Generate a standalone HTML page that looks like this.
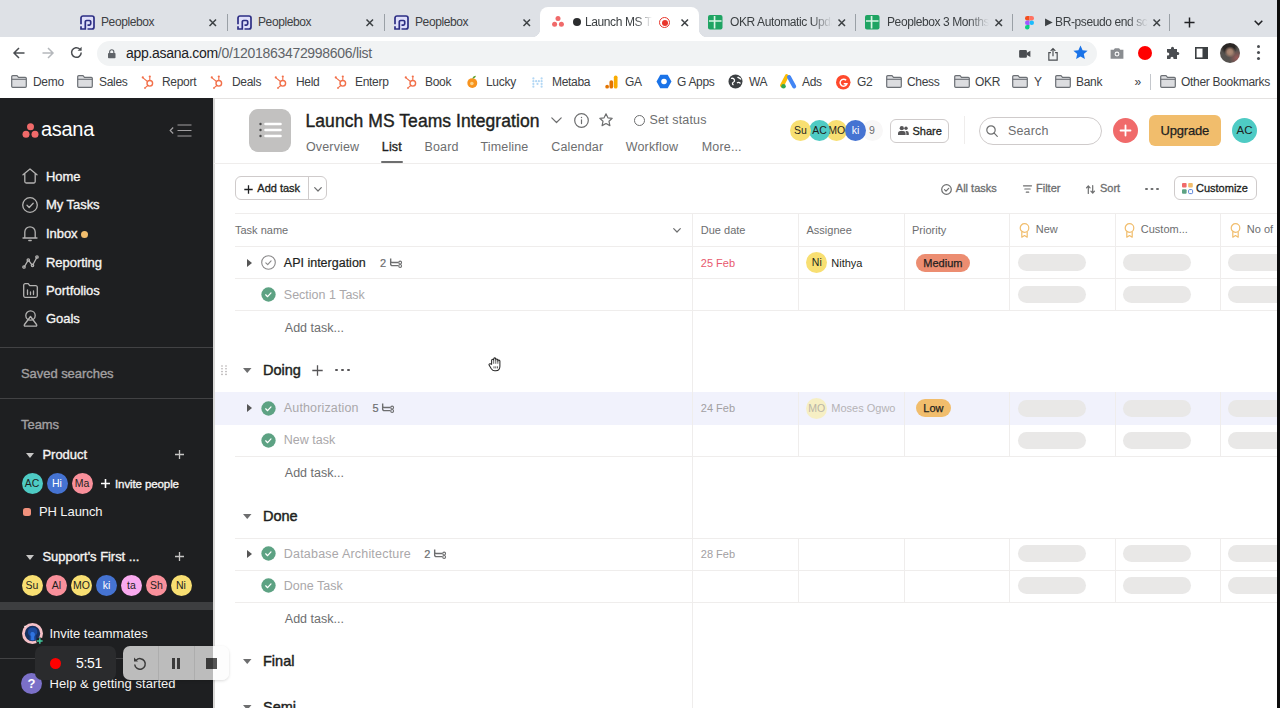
<!DOCTYPE html>
<html lang="en">
<head>
<meta charset="utf-8">
<title>Launch MS Teams Integration - Asana</title>
<style>
*{box-sizing:border-box;margin:0;padding:0}
html,body{width:1280px;height:708px;overflow:hidden;background:#fff}
body{font-family:"Liberation Sans",sans-serif;font-size:12px;color:#1e1f21;position:relative}
.a{position:absolute}
.t{position:absolute;height:20px;line-height:20px;white-space:nowrap}
svg{position:absolute;overflow:visible}
/* browser chrome */
#tabbar{left:0;top:0;width:1280px;height:37px;background:#dee1e6}
#toolbar{left:0;top:37px;width:1280px;height:31px;background:#fff}
#bookmarks{left:0;top:68px;width:1280px;height:29px;background:#fff}
.tab{font-size:12px;color:#3c4043;letter-spacing:-0.4px}
.tabx{font-size:13px;color:#3c4043}
.bm{font-size:12px;color:#3c4043;letter-spacing:-0.3px}
/* sidebar */
#side{left:0;top:97px;width:213px;height:611px;background:#1e1f21}
.nav{font-size:13px;color:#f5f4f3;-webkit-text-stroke:0.35px #f5f4f3;letter-spacing:-0.05px}
.sec{font-size:13px;color:#a2a0a2;-webkit-text-stroke:0.35px #a2a0a2;letter-spacing:-0.05px}
.av{position:absolute;width:21px;height:21px;border-radius:50%;font-size:10.500px;line-height:21px;text-align:center;color:#1e1f21}
/* main */
#main{left:213px;top:97px;width:1067px;height:611px;background:#fff}
.hline{position:absolute;height:1px;background:#efedec}
.vline{position:absolute;width:1px;background:#efedec}
.ptab{font-size:12.500px;color:#6d6e6f;letter-spacing:0.15px}
.title{font-size:17.500px;color:#1e1f21;-webkit-text-stroke:0.400px #1e1f21;letter-spacing:0.07px;height:24px!important;line-height:24px!important;margin-top:-2px}
.btn{font-size:11px;color:#1e1f21;-webkit-text-stroke:0.300px #1e1f21}
.tbtn{font-size:11px;color:#6d6e6f;-webkit-text-stroke:0.300px #6d6e6f}
.colh{font-size:11px;color:#6d6e6f}
.task{font-size:12.500px;color:#1e1f21;-webkit-text-stroke:0.200px #1e1f21}
.done{font-size:12.500px;color:#aaa8aa}
.addt{font-size:12.500px;color:#6d6e6f}
.sect{font-size:14.500px;color:#1e1f21;-webkit-text-stroke:0.450px #1e1f21}
.pill{position:absolute;width:68px;height:16px;border-radius:8px;background:#e9e8e7}
</style>
</head>
<body>
<!-- BROWSER CHROME -->
<div id="tabbar" class="a">
<div class="a" style="left:540px;top:7px;width:159px;height:30px;background:#fff;border-radius:8px 8px 0 0"></div>
<div class="a" style="left:532px;top:29px;width:8px;height:8px;background:radial-gradient(circle at 0 0,#dee1e6 8px,#fff 8.5px)"></div>
<div class="a" style="left:699px;top:29px;width:8px;height:8px;background:radial-gradient(circle at 100% 0,#dee1e6 8px,#fff 8.5px)"></div>
<!-- peoplebox tabs -->
<svg style="left:79.500px;top:14.500px" width="15" height="15" viewBox="0 0 15 15"><rect x="0.500" y="0.500" width="14" height="14" rx="2.500" fill="#dfdffa"/><path d="M1 9.300V3a2 2 0 0 1 2-2h9a2 2 0 0 1 2 2v9a2 2 0 0 1-2 2H7.500" fill="none" stroke="#2d2e83" stroke-width="1.700"/><path d="M1 11.300V14h4.300V6.800a1.300 1.300 0 0 1 1.300-1.300h2.800a1.300 1.300 0 0 1 1.300 1.300v2a1.300 1.300 0 0 1-1.300 1.300H7.500" fill="none" stroke="#2d2e83" stroke-width="1.700"/></svg>
<div class="t tab" style="left:101px;top:12px">Peoplebox</div>
<svg style="left:208.5px;top:18.500px" width="7.500" height="7.500" viewBox="0 0 7.500 7.500"><path d="M0.500 0.500l6.500 6.500M7 0.500L0.500 7" stroke="#3c4043" stroke-width="1.500" fill="none"/></svg>
<div class="a" style="left:227px;top:14px;width:1px;height:17px;background:#9aa0a6"></div>
<svg style="left:236.500px;top:14.500px" width="15" height="15" viewBox="0 0 15 15"><rect x="0.500" y="0.500" width="14" height="14" rx="2.500" fill="#dfdffa"/><path d="M1 9.300V3a2 2 0 0 1 2-2h9a2 2 0 0 1 2 2v9a2 2 0 0 1-2 2H7.500" fill="none" stroke="#2d2e83" stroke-width="1.700"/><path d="M1 11.300V14h4.300V6.800a1.300 1.300 0 0 1 1.300-1.300h2.800a1.300 1.300 0 0 1 1.300 1.300v2a1.300 1.300 0 0 1-1.300 1.300H7.500" fill="none" stroke="#2d2e83" stroke-width="1.700"/></svg>
<div class="t tab" style="left:258px;top:12px">Peoplebox</div>
<svg style="left:365.5px;top:18.500px" width="7.500" height="7.500" viewBox="0 0 7.500 7.500"><path d="M0.500 0.500l6.500 6.500M7 0.500L0.500 7" stroke="#3c4043" stroke-width="1.500" fill="none"/></svg>
<div class="a" style="left:384px;top:14px;width:1px;height:17px;background:#9aa0a6"></div>
<svg style="left:393.500px;top:14.500px" width="15" height="15" viewBox="0 0 15 15"><rect x="0.500" y="0.500" width="14" height="14" rx="2.500" fill="#dfdffa"/><path d="M1 9.300V3a2 2 0 0 1 2-2h9a2 2 0 0 1 2 2v9a2 2 0 0 1-2 2H7.500" fill="none" stroke="#2d2e83" stroke-width="1.700"/><path d="M1 11.300V14h4.300V6.800a1.300 1.300 0 0 1 1.300-1.300h2.800a1.300 1.300 0 0 1 1.300 1.300v2a1.300 1.300 0 0 1-1.300 1.300H7.500" fill="none" stroke="#2d2e83" stroke-width="1.700"/></svg>
<div class="t tab" style="left:415px;top:12px">Peoplebox</div>
<svg style="left:522.5px;top:18.500px" width="7.500" height="7.500" viewBox="0 0 7.500 7.500"><path d="M0.500 0.500l6.500 6.500M7 0.500L0.500 7" stroke="#3c4043" stroke-width="1.500" fill="none"/></svg>
<!-- active asana tab -->
<svg style="left:552px;top:16px" width="12" height="11" viewBox="0 0 12 11"><circle cx="6" cy="2.6" r="2.5" fill="#f06a6a"/><circle cx="2.6" cy="8.2" r="2.5" fill="#f06a6a"/><circle cx="9.4" cy="8.2" r="2.5" fill="#f06a6a"/></svg>
<div class="a" style="left:573px;top:18px;width:8px;height:8px;border-radius:50%;background:#2b2c2e"></div>
<div class="t tab" style="left:585px;top:12px;width:67px;overflow:hidden;-webkit-mask-image:linear-gradient(90deg,#000 75%,transparent 100%);mask-image:linear-gradient(90deg,#000 75%,transparent 100%)">Launch MS Teams</div>
<div class="a" style="left:659px;top:17px;width:11px;height:11px;border-radius:50%;border:1.5px solid #e8352b;background:#fff"></div>
<div class="a" style="left:661.5px;top:19.5px;width:6px;height:6px;border-radius:50%;background:#e8352b"></div>
<svg style="left:680.5px;top:18.500px" width="7.500" height="7.500" viewBox="0 0 7.500 7.500"><path d="M0.500 0.500l6.500 6.500M7 0.500L0.500 7" stroke="#3c4043" stroke-width="1.500" fill="none"/></svg>
<!-- sheets tabs -->
<svg style="left:708px;top:14.7px" width="14.5" height="14.5" viewBox="0 0 15 15"><rect width="15" height="15" rx="2" fill="#1fa463"/><path d="M6.8 1v13M1 6.200h13" stroke="#d9f5e5" stroke-width="1.7" fill="none"/></svg>
<div class="t tab" style="left:730px;top:12px;width:102px;overflow:hidden;-webkit-mask-image:linear-gradient(90deg,#000 80%,transparent 100%);mask-image:linear-gradient(90deg,#000 80%,transparent 100%)">OKR Automatic Update</div>
<svg style="left:837.5px;top:18.500px" width="7.500" height="7.500" viewBox="0 0 7.500 7.500"><path d="M0.500 0.500l6.500 6.500M7 0.500L0.500 7" stroke="#3c4043" stroke-width="1.500" fill="none"/></svg>
<div class="a" style="left:855px;top:14px;width:1px;height:17px;background:#9aa0a6"></div>
<svg style="left:865px;top:14.7px" width="14.5" height="14.5" viewBox="0 0 15 15"><rect width="15" height="15" rx="2" fill="#1fa463"/><path d="M6.8 1v13M1 6.200h13" stroke="#d9f5e5" stroke-width="1.7" fill="none"/></svg>
<div class="t tab" style="left:887px;top:12px;width:102px;overflow:hidden;-webkit-mask-image:linear-gradient(90deg,#000 80%,transparent 100%);mask-image:linear-gradient(90deg,#000 80%,transparent 100%)">Peoplebox 3 Months</div>
<svg style="left:994.5px;top:18.500px" width="7.500" height="7.500" viewBox="0 0 7.500 7.500"><path d="M0.500 0.500l6.500 6.500M7 0.500L0.500 7" stroke="#3c4043" stroke-width="1.500" fill="none"/></svg>
<div class="a" style="left:1012px;top:14px;width:1px;height:17px;background:#9aa0a6"></div>
<!-- figma tab -->
<svg style="left:1025px;top:16px" width="9" height="13.500" viewBox="0 0 10 15"><path d="M2.5 0H5v5H2.5a2.5 2.5 0 0 1 0-5z" fill="#f24e1e"/><path d="M5 0h2.5a2.5 2.5 0 0 1 0 5H5z" fill="#ff7262"/><path d="M2.5 5H5v5H2.5a2.5 2.5 0 0 1 0-5z" fill="#a259ff"/><circle cx="7.5" cy="7.5" r="2.5" fill="#1abcfe"/><path d="M2.5 10H5v2.5A2.5 2.5 0 1 1 2.500 10z" fill="#0acf83"/></svg>
<div class="t tab" style="left:1044.500px;top:12px;width:103px;overflow:hidden;-webkit-mask-image:linear-gradient(90deg,#000 80%,transparent 100%);mask-image:linear-gradient(90deg,#000 80%,transparent 100%)"><span style="font-size:10px;position:relative;top:-1px">▶</span> BR-pseudo end sc</div>
<svg style="left:1152.5px;top:18.500px" width="7.500" height="7.500" viewBox="0 0 7.500 7.500"><path d="M0.500 0.500l6.500 6.500M7 0.500L0.500 7" stroke="#3c4043" stroke-width="1.500" fill="none"/></svg>
<div class="a" style="left:1169px;top:14px;width:1px;height:17px;background:#9aa0a6"></div>
<svg style="left:1184px;top:17px" width="11" height="11" viewBox="0 0 12 12"><path d="M6 0.5v11M0.5 6h11" stroke="#202124" stroke-width="1.6" fill="none"/></svg>
<svg style="left:1254px;top:20px" width="9" height="6" viewBox="0 0 9 6"><path d="M0.7 0.8L4.5 4.6 8.3 0.8" stroke="#202124" stroke-width="1.5" fill="none"/></svg>
</div>
<div id="toolbar" class="a">
<svg style="left:13px;top:10px" width="12" height="12" viewBox="0 0 12 12"><path d="M11.5 6H1M6 1L1 6l5 5" stroke="#4a4d51" stroke-width="1.5" fill="none"/></svg>
<svg style="left:42px;top:10px" width="12" height="12" viewBox="0 0 12 12"><path d="M0.5 6H11M6 1l5 5-5 5" stroke="#b5b8bc" stroke-width="1.5" fill="none"/></svg>
<svg style="left:70px;top:9px" width="13" height="13" viewBox="0 0 13 13"><path d="M11.2 6.5a4.8 4.8 0 1 1-1.5-3.5" stroke="#4a4d51" stroke-width="1.5" fill="none"/><path d="M11.6 0.8v4h-4z" fill="#4a4d51"/></svg>
<div class="a" style="left:97px;top:3.500px;width:1000px;height:25.500px;border-radius:13px;background:#f1f3f4"></div>
<svg style="left:108px;top:11.500px" width="7.500" height="9.500" viewBox="0 0 9 11"><rect x="0" y="4.5" width="9" height="6.5" rx="1" fill="#5f6368"/><path d="M2 5V3.2a2.5 2.5 0 0 1 5 0V5" stroke="#5f6368" stroke-width="1.4" fill="none"/></svg>
<div class="t" style="left:126px;top:6px;font-size:14px;color:#202124;letter-spacing:-0.3px">app.asana.com<span style="color:#5f6368">/0/1201863472998606/list</span></div>
<!-- right icons -->
<svg style="left:1018.500px;top:12.800px" width="11.500" height="7.800" viewBox="0 0 13 9"><rect x="0" y="0" width="9" height="9" rx="1.2" fill="#4a4d51"/><path d="M9 3.2L13 0.8v7.4L9 5.8z" fill="#4a4d51"/></svg>
<svg style="left:1047.500px;top:10.500px" width="10" height="12.500" viewBox="0 0 12 15"><path d="M3.5 5.5H1v9h10v-9H8.500M6 10V1M3.200 3.500L6 0.800 8.800 3.500" stroke="#4a4d51" stroke-width="1.4" fill="none"/></svg>
<svg style="left:1073px;top:8px" width="15" height="15" viewBox="0 0 15 15"><path d="M7.5 0.500l2.100 4.700 5 .500-3.800 3.400 1.100 5L7.500 11.500 3.100 14.100l1.100-5L0.400 5.700l5-.5z" fill="#1a73e8"/></svg>
<svg style="left:1109px;top:9.500px" width="16" height="13" viewBox="0 0 15 12"><path d="M1.500 2.500h3l1-1.500h4l1 1.500h3v8.500h-12z" fill="#8a8d91"/><circle cx="7.500" cy="6.500" r="2.300" fill="#fff"/><circle cx="7.500" cy="6.500" r="1.300" fill="#8a8d91"/></svg>
<div class="a" style="left:1138px;top:9px;width:14px;height:14px;border-radius:50%;background:#f00"></div>
<svg style="left:1166px;top:9px" width="14" height="14" viewBox="0 0 14 14"><path d="M5 2.200a1.500 1.500 0 0 1 3 0V3h3v3h.8a1.500 1.500 0 0 1 0 3H11v4H7.500v-.8a1.500 1.500 0 0 0-3 0V13H1V9.500h.8a1.500 1.500 0 0 0 0-3H1V3h4z" fill="#4a4d51"/></svg>
<svg style="left:1195px;top:10px" width="13" height="12" viewBox="0 0 13 12"><rect x="0.800" y="0.800" width="11.400" height="10.400" fill="none" stroke="#3c4043" stroke-width="1.600"/><rect x="7.500" y="0.800" width="4.700" height="10.400" fill="#3c4043"/></svg>
<div class="a" style="left:1220px;top:6px;width:20px;height:20px;border-radius:50%;background:radial-gradient(circle at 50% 45%,#b08c78 0,#a07e6c 18%,rgba(90,70,60,0) 38%),radial-gradient(circle at 45% 15%,#2a2624 0,#2a2624 28%,rgba(0,0,0,0) 45%),radial-gradient(circle at 85% 75%,#9a5a58 0,rgba(154,90,88,0) 35%),#55524f"></div>
<div class="a" style="left:1257px;top:8px;width:3px;height:3px;border-radius:50%;background:#4a4d51;box-shadow:0 6px 0 #4a4d51,0 12px 0 #4a4d51"></div>
</div>
<div id="bookmarks" class="a">
<svg style="left:11px;top:7px" width="16" height="13" viewBox="0 0 16 13"><path d="M1.700 0.700h4.300l1.500 1.600h6.800a1 1 0 0 1 1 1v8a1 1 0 0 1-1 1H1.700a1 1 0 0 1-1-1V1.700a1 1 0 0 1 1-1z" fill="#dcdde0" stroke="#6c7075" stroke-width="1.200"/><path d="M0.700 4.300h14.600" stroke="#6c7075" stroke-width="1.100"/></svg>
<div class="t bm" style="left:33px;top:4px">Demo</div>
<svg style="left:77px;top:7px" width="16" height="13" viewBox="0 0 16 13"><path d="M1.700 0.700h4.300l1.500 1.600h6.800a1 1 0 0 1 1 1v8a1 1 0 0 1-1 1H1.700a1 1 0 0 1-1-1V1.700a1 1 0 0 1 1-1z" fill="#dcdde0" stroke="#6c7075" stroke-width="1.200"/><path d="M0.700 4.300h14.600" stroke="#6c7075" stroke-width="1.100"/></svg>
<div class="t bm" style="left:99px;top:4px">Sales</div>
<svg style="left:141px;top:6px" width="14" height="15" viewBox="0 0 14 15"><circle cx="8.800" cy="9.300" r="2.800" fill="none" stroke="#f2704a" stroke-width="1.400"/><path d="M8.800 6.300V3.200M6.500 7.500L2 3.800M6.800 11.500L4.300 13.700" stroke="#f2704a" stroke-width="1.100" fill="none"/><circle cx="8.800" cy="2.600" r="1.100" fill="#f2704a"/><circle cx="1.800" cy="3.400" r="1.100" fill="#f2704a"/><circle cx="4" cy="14" r="0.900" fill="#f2704a"/></svg>
<div class="t bm" style="left:162px;top:4px">Report</div>
<svg style="left:210px;top:6px" width="14" height="15" viewBox="0 0 14 15"><circle cx="8.800" cy="9.300" r="2.800" fill="none" stroke="#f2704a" stroke-width="1.400"/><path d="M8.800 6.300V3.200M6.500 7.500L2 3.800M6.800 11.500L4.300 13.700" stroke="#f2704a" stroke-width="1.100" fill="none"/><circle cx="8.800" cy="2.600" r="1.100" fill="#f2704a"/><circle cx="1.800" cy="3.400" r="1.100" fill="#f2704a"/><circle cx="4" cy="14" r="0.900" fill="#f2704a"/></svg>
<div class="t bm" style="left:232px;top:4px">Deals</div>
<svg style="left:274px;top:6px" width="14" height="15" viewBox="0 0 14 15"><circle cx="8.800" cy="9.300" r="2.800" fill="none" stroke="#f2704a" stroke-width="1.400"/><path d="M8.800 6.300V3.200M6.500 7.500L2 3.800M6.800 11.500L4.300 13.700" stroke="#f2704a" stroke-width="1.100" fill="none"/><circle cx="8.800" cy="2.600" r="1.100" fill="#f2704a"/><circle cx="1.800" cy="3.400" r="1.100" fill="#f2704a"/><circle cx="4" cy="14" r="0.900" fill="#f2704a"/></svg>
<div class="t bm" style="left:296px;top:4px">Held</div>
<svg style="left:334px;top:6px" width="14" height="15" viewBox="0 0 14 15"><circle cx="8.800" cy="9.300" r="2.800" fill="none" stroke="#f2704a" stroke-width="1.400"/><path d="M8.800 6.300V3.200M6.500 7.500L2 3.800M6.800 11.500L4.300 13.700" stroke="#f2704a" stroke-width="1.100" fill="none"/><circle cx="8.800" cy="2.600" r="1.100" fill="#f2704a"/><circle cx="1.800" cy="3.400" r="1.100" fill="#f2704a"/><circle cx="4" cy="14" r="0.900" fill="#f2704a"/></svg>
<div class="t bm" style="left:355px;top:4px">Enterp</div>
<svg style="left:404px;top:6px" width="14" height="15" viewBox="0 0 14 15"><circle cx="8.800" cy="9.300" r="2.800" fill="none" stroke="#f2704a" stroke-width="1.400"/><path d="M8.800 6.300V3.200M6.500 7.500L2 3.800M6.800 11.500L4.300 13.700" stroke="#f2704a" stroke-width="1.100" fill="none"/><circle cx="8.800" cy="2.600" r="1.100" fill="#f2704a"/><circle cx="1.800" cy="3.400" r="1.100" fill="#f2704a"/><circle cx="4" cy="14" r="0.900" fill="#f2704a"/></svg>
<div class="t bm" style="left:425px;top:4px">Book</div>
<svg style="left:466px;top:7px" width="13.500" height="13.500" viewBox="0 0 15 15"><circle cx="7" cy="9" r="5.500" fill="#f7931e"/><circle cx="6.500" cy="9.500" r="2" fill="#fbd28a"/><path d="M7 4c.5-2 2-3.200 4-3.200-.3 2-1.800 3.200-4 3.200z" fill="#5aa02c"/></svg>
<div class="t bm" style="left:486px;top:4px">Lucky</div>
<svg style="left:532px;top:8.500px" width="11" height="11" viewBox="0 0 12 12"><g fill="#b3d7f4"><circle cx="1.500" cy="1.500" r="1.200"/><circle cx="1.500" cy="4.500" r="1.200"/><circle cx="1.500" cy="7.500" r="1.200"/><circle cx="1.500" cy="10.500" r="1.200"/><circle cx="10.500" cy="1.500" r="1.200"/><circle cx="10.500" cy="4.500" r="1.200"/><circle cx="10.500" cy="7.500" r="1.200"/><circle cx="10.500" cy="10.500" r="1.200"/><circle cx="4.500" cy="4.500" r="1.200"/><circle cx="7.500" cy="4.500" r="1.200"/><circle cx="6" cy="7.500" r="1.200"/></g></svg>
<div class="t bm" style="left:552px;top:4px">Metaba</div>
<svg style="left:605px;top:7px" width="13" height="14" viewBox="0 0 14 15"><rect x="9.500" y="0.500" width="4" height="14" rx="2" fill="#f9ab00"/><rect x="4.800" y="5.500" width="4" height="9" rx="2" fill="#e37400"/><circle cx="2.300" cy="12.500" r="2" fill="#e37400"/></svg>
<div class="t bm" style="left:625px;top:4px">GA</div>
<svg style="left:656px;top:6px" width="16" height="15" viewBox="0 0 16 15"><path d="M4.300 0.800h7.400L15.500 7.500l-3.800 6.700H4.300L0.500 7.500z" fill="#1a73e8"/><circle cx="8" cy="7.500" r="2.800" fill="#fff"/></svg>
<div class="t bm" style="left:677px;top:4px">G Apps</div>
<svg style="left:728px;top:6px" width="15" height="15" viewBox="0 0 15 15"><circle cx="7.500" cy="7.500" r="7" fill="#3c4043"/><path d="M3 4.500c1.500-.5 3 .2 3.500 1.500s-.5 2-1.500 2.500-.5 2 .5 2.500M9.500 3c1 1 2.500 1 3.500 2.500M9 9c1-.8 2.500-.5 3.500.500" stroke="#fff" stroke-width="1.300" fill="none"/></svg>
<div class="t bm" style="left:749px;top:4px">WA</div>
<svg style="left:781px;top:7px" width="16" height="14" viewBox="0 0 16 14"><path d="M5.800 1.200L1 10.500" stroke="#fbbc04" stroke-width="4" stroke-linecap="round"/><path d="M8 2l5.200 9.500" stroke="#4285f4" stroke-width="4" stroke-linecap="round"/><circle cx="2.500" cy="11.300" r="2.300" fill="#34a853"/></svg>
<div class="t bm" style="left:802px;top:4px">Ads</div>
<svg style="left:836px;top:6.500px" width="14.500" height="14.500" viewBox="0 0 15 15"><circle cx="7.500" cy="7.500" r="7.500" fill="#ff492c"/><path d="M10.500 5.500a3.600 3.600 0 1 0 .8 3.500H8" stroke="#fff" stroke-width="1.500" fill="none"/></svg>
<div class="t bm" style="left:857px;top:4px">G2</div>
<svg style="left:886px;top:7px" width="16" height="13" viewBox="0 0 16 13"><path d="M1.700 0.700h4.300l1.500 1.600h6.800a1 1 0 0 1 1 1v8a1 1 0 0 1-1 1H1.700a1 1 0 0 1-1-1V1.700a1 1 0 0 1 1-1z" fill="#dcdde0" stroke="#6c7075" stroke-width="1.200"/><path d="M0.700 4.300h14.600" stroke="#6c7075" stroke-width="1.100"/></svg>
<div class="t bm" style="left:907px;top:4px">Chess</div>
<svg style="left:954px;top:7px" width="16" height="13" viewBox="0 0 16 13"><path d="M1.700 0.700h4.300l1.500 1.600h6.800a1 1 0 0 1 1 1v8a1 1 0 0 1-1 1H1.700a1 1 0 0 1-1-1V1.700a1 1 0 0 1 1-1z" fill="#dcdde0" stroke="#6c7075" stroke-width="1.200"/><path d="M0.700 4.300h14.600" stroke="#6c7075" stroke-width="1.100"/></svg>
<div class="t bm" style="left:975px;top:4px">OKR</div>
<svg style="left:1012px;top:7px" width="16" height="13" viewBox="0 0 16 13"><path d="M1.700 0.700h4.300l1.500 1.600h6.800a1 1 0 0 1 1 1v8a1 1 0 0 1-1 1H1.700a1 1 0 0 1-1-1V1.700a1 1 0 0 1 1-1z" fill="#dcdde0" stroke="#6c7075" stroke-width="1.200"/><path d="M0.700 4.300h14.600" stroke="#6c7075" stroke-width="1.100"/></svg>
<div class="t bm" style="left:1034px;top:4px">Y</div>
<svg style="left:1055px;top:7px" width="16" height="13" viewBox="0 0 16 13"><path d="M1.700 0.700h4.300l1.500 1.600h6.800a1 1 0 0 1 1 1v8a1 1 0 0 1-1 1H1.700a1 1 0 0 1-1-1V1.700a1 1 0 0 1 1-1z" fill="#dcdde0" stroke="#6c7075" stroke-width="1.200"/><path d="M0.700 4.300h14.600" stroke="#6c7075" stroke-width="1.100"/></svg>
<div class="t bm" style="left:1076px;top:4px">Bank</div>
<div class="t bm" style="left:1134.500px;top:3.500px;font-size:12px">»</div>
<div class="a" style="left:1150px;top:6px;width:1px;height:16px;background:#c4c7cc"></div>
<svg style="left:1160px;top:7px" width="16" height="13" viewBox="0 0 16 13"><path d="M1.700 0.700h4.300l1.500 1.600h6.800a1 1 0 0 1 1 1v8a1 1 0 0 1-1 1H1.700a1 1 0 0 1-1-1V1.700a1 1 0 0 1 1-1z" fill="#dcdde0" stroke="#6c7075" stroke-width="1.200"/><path d="M0.700 4.300h14.600" stroke="#6c7075" stroke-width="1.100"/></svg>
<div class="t bm" style="left:1181px;top:4px">Other Bookmarks</div>
</div>
<!-- SIDEBAR -->
<div id="side" class="a">
<svg style="left:22px;top:26px" width="17" height="15" viewBox="0 0 17 15"><circle cx="8.500" cy="3.700" r="3.500" fill="#f06a6a"/><circle cx="4" cy="11.200" r="3.500" fill="#f06a6a"/><circle cx="13" cy="11.200" r="3.500" fill="#f06a6a"/></svg>
<div class="t" style="left:41px;top:20px;height:24px;line-height:24px;font-size:20px;color:#fff;letter-spacing:-0.3px">asana</div>
<svg style="left:169px;top:27px" width="23" height="13" viewBox="0 0 23 13"><path d="M8.500 1h14M8.500 6.500h14M8.500 12h14" stroke="#a2a0a2" stroke-width="1.200" fill="none"/><path d="M4.200 3.500L1.200 6.500l3 3" stroke="#a2a0a2" stroke-width="1.200" fill="none"/></svg>
<svg style="left:22px;top:71px" width="16" height="16" viewBox="0 0 16 16"><path d="M1 6.800L8 1l7 5.800M2.800 5.500V13.500a1.500 1.500 0 0 0 1.500 1.500h7.400a1.500 1.500 0 0 0 1.500-1.500V5.500" stroke="#b4b3b2" stroke-width="1.300" fill="none" stroke-linecap="round" stroke-linejoin="round"/></svg>
<div class="t nav" style="left:46px;top:69.5px;">Home</div>
<svg style="left:22px;top:100px" width="16" height="16" viewBox="0 0 16 16"><circle cx="8" cy="8" r="7.300" stroke="#b4b3b2" stroke-width="1.300" fill="none" stroke-linecap="round" stroke-linejoin="round"/><path d="M5 8.300l2.200 2.200 4-4.300" stroke="#b4b3b2" stroke-width="1.300" fill="none" stroke-linecap="round" stroke-linejoin="round"/></svg>
<div class="t nav" style="left:46px;top:98px;">My Tasks</div>
<svg style="left:22px;top:128px" width="16" height="17" viewBox="0 0 16 17"><path d="M1 13h14M2.800 13V7a5.200 5.200 0 0 1 10.400 0v6M6.800 15.500h2.400" stroke="#b4b3b2" stroke-width="1.300" fill="none" stroke-linecap="round" stroke-linejoin="round"/></svg>
<div class="t nav" style="left:46px;top:126.5px;">Inbox</div>
<div class="a" style="left:81px;top:134px;width:7px;height:7px;border-radius:50%;background:#f1bd6c"></div>
<svg style="left:22px;top:158px" width="17" height="14" viewBox="0 0 17 14"><path d="M2.500 11.500L5.800 5.800M7 5.800l3 4M11 9.500l3.800-7" stroke="#b4b3b2" stroke-width="1.300" fill="none" stroke-linecap="round" stroke-linejoin="round"/><circle cx="2" cy="12" r="1.200" stroke="#b4b3b2" stroke-width="1.300" fill="none" stroke-linecap="round" stroke-linejoin="round"/><circle cx="6.300" cy="5" r="1.200" stroke="#b4b3b2" stroke-width="1.300" fill="none" stroke-linecap="round" stroke-linejoin="round"/><circle cx="10.500" cy="10.300" r="1.200" stroke="#b4b3b2" stroke-width="1.300" fill="none" stroke-linecap="round" stroke-linejoin="round"/><circle cx="15" cy="2" r="1.200" stroke="#b4b3b2" stroke-width="1.300" fill="none" stroke-linecap="round" stroke-linejoin="round"/></svg>
<div class="t nav" style="left:46px;top:155.5px;">Reporting</div>
<svg style="left:23px;top:186px" width="15" height="15" viewBox="0 0 15 15"><path d="M0.700 2.200a1.500 1.500 0 0 1 1.500-1.500h3l1.500 2h6.100a1.500 1.500 0 0 1 1.500 1.500v8.600a1.500 1.500 0 0 1-1.500 1.500H2.200a1.500 1.500 0 0 1-1.500-1.500z" stroke="#b4b3b2" stroke-width="1.300" fill="none" stroke-linecap="round" stroke-linejoin="round"/><path d="M4.500 7v4.500M7.500 9v2.500M10.500 8v3.500" stroke="#b4b3b2" stroke-width="1.300" fill="none" stroke-linecap="round" stroke-linejoin="round"/></svg>
<div class="t nav" style="left:46px;top:183.5px;">Portfolios</div>
<svg style="left:23px;top:213px" width="15" height="17" viewBox="0 0 15 17"><circle cx="7.500" cy="5.500" r="4.700" stroke="#b4b3b2" stroke-width="1.300" fill="none" stroke-linecap="round" stroke-linejoin="round"/><path d="M7.500 6.500L1.500 14.500a1 1 0 0 0 .8 1.700h10.400a1 1 0 0 0 .8-1.700z" stroke="#b4b3b2" stroke-width="1.300" fill="none" stroke-linecap="round" stroke-linejoin="round"/></svg>
<div class="t nav" style="left:46px;top:211.5px;">Goals</div>
<div class="a" style="left:0;top:250px;width:213px;height:1px;background:#424244"></div>
<div class="t sec" style="left:21px;top:267px;">Saved searches</div>
<div class="a" style="left:0;top:301px;width:213px;height:1px;background:#424244"></div>
<div class="t sec" style="left:21px;top:318px;">Teams</div>
<svg style="left:26px;top:355.5px" width="8" height="5" viewBox="0 0 8 5"><path d="M0 0h8L4 5z" fill="#c7c6c5"/></svg>
<div class="t nav" style="left:42.5px;top:347.5px;">Product</div>
<svg style="left:175px;top:353px" width="9" height="9" viewBox="0 0 9 9"><path d="M4.500 0v9M0 4.500h9" stroke="#c7c6c5" stroke-width="1.300" fill="none"/></svg>
<div class="av" style="left:21.5px;top:375.5px;background:#4ecbc4;color:#1e1f21">AC</div>
<div class="av" style="left:46.5px;top:375.5px;background:#4573d2;color:#fff">Hi</div>
<div class="av" style="left:71.5px;top:375.5px;background:#f9909b;color:#1e1f21">Ma</div>
<svg style="left:101px;top:382px" width="9" height="9" viewBox="0 0 9 9"><path d="M4.500 0v9M0 4.500h9" stroke="#fff" stroke-width="1.600" fill="none"/></svg>
<div class="t nav" style="left:115px;top:376.5px;font-size:11.5px;letter-spacing:-0.1px">Invite people</div>
<div class="a" style="left:23px;top:411px;width:8px;height:8px;border-radius:2.500px;background:#f1917c"></div>
<div class="t nav" style="left:39px;top:404.5px;-webkit-text-stroke:0;letter-spacing:-0.1px">PH Launch</div>
<svg style="left:26px;top:457.5px" width="8" height="5" viewBox="0 0 8 5"><path d="M0 0h8L4 5z" fill="#c7c6c5"/></svg>
<div class="t nav" style="left:42.5px;top:449.5px;">Support's First ...</div>
<svg style="left:175px;top:455px" width="9" height="9" viewBox="0 0 9 9"><path d="M4.500 0v9M0 4.500h9" stroke="#c7c6c5" stroke-width="1.300" fill="none"/></svg>
<div class="av" style="left:21.5px;top:477.5px;background:#f8df72;color:#1e1f21">Su</div>
<div class="av" style="left:46.0px;top:477.5px;background:#f9909b;color:#1e1f21">Al</div>
<div class="av" style="left:71.0px;top:477.5px;background:#f8df72;color:#1e1f21">MO</div>
<div class="av" style="left:96.0px;top:477.5px;background:#4573d2;color:#fff">ki</div>
<div class="av" style="left:121.0px;top:477.5px;background:#f9aaef;color:#1e1f21">ta</div>
<div class="av" style="left:146.0px;top:477.5px;background:#f9909b;color:#1e1f21">Sh</div>
<div class="av" style="left:170.5px;top:477.5px;background:#f8df72;color:#1e1f21">Ni</div>
<div class="a" style="left:0;top:504.5px;width:213px;height:8px;background:#3d3e40"></div>
<div class="a" style="left:21.500px;top:526px;width:21px;height:21px;border-radius:50%;background:#f6c1c8"></div>
<svg style="left:21.500px;top:526px" width="22" height="22" viewBox="0 0 22 22"><circle cx="10.500" cy="10.500" r="7.700" fill="#16305e"/><path d="M6 8.500c.2-2.800 2.500-4.300 4.800-4 2.500-.3 4.700 1.500 4.500 4.200.2 1.800-.7 3-1.800 3.700l.3 4.500c-2 1-4.500 1-6.300.2l.3-4.400C6.500 11.800 5.800 10.300 6 8.500z" fill="#1d4a9c"/><path d="M9 9.500c1.500-.8 3.200-.3 3.800 1.200.4 1.300-.2 2.300-.8 3l.2 3.300c-1.200.3-2.300.3-3.200 0l.2-3.500c-.9-1-1.200-2.800-.2-4z" fill="#2f74e0"/><circle cx="17.800" cy="18" r="3.600" fill="#1e1f21"/><path d="M17.800 15.200v5.600M15 18h5.600" stroke="#41c99d" stroke-width="1.500"/><path d="M2.500 2.800l1 1.200M3.500 2.800l-1 1.200" stroke="#fff" stroke-width="0.800"/></svg>
<div class="t nav" style="left:49.5px;top:526.5px;-webkit-text-stroke:0;letter-spacing:-0.05px">Invite teammates</div>
<div class="a" style="left:0;top:560.5px;width:213px;height:1px;background:#424244"></div>
<div class="a" style="left:21px;top:576px;width:21px;height:21px;border-radius:50%;background:#7b70c8;color:#fff;font-size:13px;font-weight:bold;line-height:21px;text-align:center">?</div>
<div class="t nav" style="left:49.5px;top:576.5px;-webkit-text-stroke:0;letter-spacing:0.05px">Help &amp; getting started</div>
</div>
<!-- MAIN -->
<div class="a" style="left:0;top:97px;width:213px;height:1px;background:#fff"></div>
<div id="main" class="a"></div>
<div class="hline" style="left:213px;top:97.500px;width:1067px;background:#e4e2e1"></div>
<div class="a" style="left:213px;top:98px;width:1.500px;height:610px;background:#d9d8d7"></div>
<div class="a" style="left:248.500px;top:109px;width:42.500px;height:43px;border-radius:9px;background:#c2c1c0"></div>
<svg style="left:259px;top:122px" width="23" height="16" viewBox="0 0 23 16"><path d="M6.500 2h15M6.500 8h15M6.500 14h15" stroke="#fff" stroke-width="2.600" stroke-linecap="round"/><circle cx="1.500" cy="2" r="1.200" fill="#4a4a4a"/><circle cx="1.500" cy="8" r="1.200" fill="#4a4a4a"/><circle cx="1.500" cy="14" r="1.200" fill="#4a4a4a"/></svg>
<div class="t title" style="left:305.5px;top:110.5px;">Launch MS Teams Integration</div>
<svg style="left:550.500px;top:117px" width="11" height="7" viewBox="0 0 11 7"><path d="M0.800 0.800L5.500 5.500 10.200 0.800" stroke="#6d6e6f" stroke-width="1.200" fill="none" stroke-linecap="round" stroke-linejoin="round"/></svg>
<svg style="left:573.500px;top:113px" width="15" height="15" viewBox="0 0 15 15"><circle cx="7.500" cy="7.500" r="6.800" stroke="#6d6e6f" stroke-width="1.200" fill="none" stroke-linecap="round" stroke-linejoin="round"/><path d="M7.500 6.800v3.800" stroke="#6d6e6f" stroke-width="1.200" fill="none" stroke-linecap="round" stroke-linejoin="round"/><circle cx="7.500" cy="4.500" r="0.700" fill="#6d6e6f"/></svg>
<svg style="left:599px;top:113px" width="14" height="14" viewBox="0 0 14 14"><path d="M7 0.800l1.900 4 4.300.500-3.200 3 .9 4.300L7 10.500l-3.900 2.100.9-4.300-3.200-3 4.300-.5z" stroke="#6d6e6f" stroke-width="1.200" fill="none" stroke-linecap="round" stroke-linejoin="round"/></svg>
<div class="a" style="left:633.500px;top:114.500px;width:11px;height:11px;border-radius:50%;border:1.200px solid #6d6e6f"></div>
<div class="t ptab" style="left:649.5px;top:110px;font-size:12.500px">Set status</div>
<div class="t ptab" style="left:306px;top:136.5px;">Overview</div>
<div class="t ptab" style="left:424.5px;top:136.5px;">Board</div>
<div class="t ptab" style="left:480.5px;top:136.5px;">Timeline</div>
<div class="t ptab" style="left:551.3px;top:136.5px;">Calendar</div>
<div class="t ptab" style="left:625.8px;top:136.5px;">Workflow</div>
<div class="t ptab" style="left:701.8px;top:136.5px;">More...</div>
<div class="t ptab" style="left:381.8px;top:136.5px;color:#1e1f21;-webkit-text-stroke:0.350px #1e1f21">List</div>
<div class="a" style="left:381px;top:160.500px;width:21.500px;height:2px;background:#6d6e6f;border-radius:1px"></div>
<div class="hline" style="left:214px;top:162.500px;width:1063px"></div>
<div class="av" style="left:861.5px;top:120.2px;width:21px;height:21px;line-height:21px;font-size:10.5px;background:#f8f7f7;color:#6d6e6f;z-index:1">9</div>
<div class="av" style="left:845.0px;top:120.19999999999999px;width:21px;height:21px;line-height:21px;font-size:10.5px;background:#4573d2;color:#fff;z-index:3">ki</div>
<div class="av" style="left:826.300px;top:120.19999999999999px;width:21px;height:21px;line-height:21px;font-size:10.5px;background:#f8df72;color:#1e1f21;z-index:2">MO</div>
<div class="av" style="left:809.0px;top:120.19999999999999px;width:21px;height:21px;line-height:21px;font-size:10.5px;background:#4ecbc4;color:#1e1f21;z-index:4">AC</div>
<div class="av" style="left:790.0px;top:120.19999999999999px;width:21px;height:21px;line-height:21px;font-size:10.5px;background:#f8df72;color:#1e1f21;z-index:5">Su</div>
<div class="a" style="left:890px;top:118.500px;width:59px;height:24px;border:1px solid #cfcbcb;border-radius:6px"></div>
<svg style="left:897.500px;top:126px" width="11" height="9" viewBox="0 0 11 9"><circle cx="3.800" cy="2.200" r="2.100" fill="#565557"/><path d="M0 9V7.500a2.500 2.500 0 0 1 2.500-2.500h2.600a2.500 2.500 0 0 1 2.500 2.500V9z" fill="#565557"/><circle cx="8" cy="2.300" r="1.700" fill="#565557"/><path d="M8.300 9V7.300c0-.9-.3-1.700-.9-2.300h1.100a2.300 2.300 0 0 1 2.300 2.300V9z" fill="#565557"/></svg>
<div class="t btn" style="left:912.5px;top:120.69999999999999px;">Share</div>
<div class="a" style="left:963.500px;top:116px;width:1px;height:28px;background:#efedec"></div>
<div class="a" style="left:978.500px;top:116.500px;width:123px;height:28px;border:1px solid #cfcbcb;border-radius:14px"></div>
<svg style="left:986px;top:124.500px" width="12" height="12" viewBox="0 0 12 12"><circle cx="5" cy="5" r="4.200" stroke="#6d6e6f" stroke-width="1.200" fill="none" stroke-linecap="round" stroke-linejoin="round"/><path d="M8.200 8.200L11.300 11.300" stroke="#6d6e6f" stroke-width="1.200" fill="none" stroke-linecap="round" stroke-linejoin="round"/></svg>
<div class="t ptab" style="left:1008px;top:121px;">Search</div>
<div class="a" style="left:1113px;top:118.200px;width:25px;height:25px;border-radius:50%;background:#f06a6a"></div>
<svg style="left:1120px;top:125.200px" width="11" height="11" viewBox="0 0 11 11"><path d="M5.500 0.500v10M0.500 5.500h10" stroke="#fff" stroke-width="1.800" stroke-linecap="round"/></svg>
<div class="a" style="left:1148.500px;top:114.800px;width:72.500px;height:31.500px;border-radius:6px;background:#f1bd6c"></div>
<div class="t task" style="left:1160.5px;top:121px;font-size:13px;letter-spacing:-0.2px;-webkit-text-stroke:0.250px #1e1f21">Upgrade</div>
<div class="av" style="left:1232.0px;top:118.19999999999999px;width:25px;height:25px;line-height:25px;font-size:11.5px;background:#4ecbc4;color:#1e1f21;z-index:1">AC</div>
<div class="a" style="left:235px;top:176.300px;width:92px;height:24.200px;border:1px solid #cfcbcb;border-radius:6px"></div>
<div class="a" style="left:307.500px;top:177px;width:1px;height:23px;background:#cfcbcb"></div>
<svg style="left:243.500px;top:184.500px" width="9" height="9" viewBox="0 0 9 9"><path d="M4.500 0.300v8.400M0.300 4.500h8.400" stroke="#1e1f21" stroke-width="1.300"/></svg>
<div class="t btn" style="left:257.3px;top:178.2px;">Add task</div>
<svg style="left:313.500px;top:186.500px" width="8" height="5" viewBox="0 0 8 5"><path d="M0.700 0.700L4 4 7.300 0.700" stroke="#6d6e6f" stroke-width="1.200" fill="none" stroke-linecap="round" stroke-linejoin="round"/></svg>
<svg style="left:941px;top:183.500px" width="11" height="11" viewBox="0 0 11 11"><circle cx="5.500" cy="5.500" r="4.800" stroke="#6d6e6f" stroke-width="1.200" fill="none" stroke-linecap="round" stroke-linejoin="round"/><path d="M3.500 5.700l1.500 1.500 2.700-2.900" stroke="#6d6e6f" stroke-width="1.200" fill="none" stroke-linecap="round" stroke-linejoin="round"/></svg>
<div class="t tbtn" style="left:955.8px;top:178.2px;">All tasks</div>
<svg style="left:1022.500px;top:185px" width="9" height="8" viewBox="0 0 9 8"><path d="M0.500 0.800h8M1.800 4h5.400M3.300 7.200h2.400" stroke="#6d6e6f" stroke-width="1.200" fill="none" stroke-linecap="round" stroke-linejoin="round"/></svg>
<div class="t tbtn" style="left:1036px;top:178.2px;">Filter</div>
<svg style="left:1086px;top:184.500px" width="9" height="9" viewBox="0 0 9 9"><path d="M2.300 8.500V1M0.500 2.800L2.300 0.800 4.100 2.800M6.700 0.500V8M4.900 6.200L6.700 8.200 8.500 6.200" stroke="#6d6e6f" stroke-width="1.200" fill="none" stroke-linecap="round" stroke-linejoin="round"/></svg>
<div class="t tbtn" style="left:1100px;top:178.2px;">Sort</div>
<div class="a" style="left:1145px;top:187.500px;width:2.500px;height:2.500px;border-radius:50%;background:#6d6e6f;box-shadow:5.500px 0 0 #6d6e6f,11px 0 0 #6d6e6f"></div>
<div class="a" style="left:1174px;top:176.200px;width:83px;height:24.200px;border:1px solid #cfcbcb;border-radius:6px"></div>
<svg style="left:1181.700px;top:183px" width="11" height="11" viewBox="0 0 11 11"><rect x="0" y="0" width="4.600" height="4.600" rx="1" fill="#f06a6a"/><rect x="6.200" y="0" width="4.600" height="4.600" rx="1" fill="#f1bd6c"/><rect x="0" y="6.200" width="4.600" height="4.600" rx="1" fill="#5da283"/><rect x="6.600" y="6.600" width="4" height="4" rx="1" fill="none" stroke="#4573d2" stroke-width="0.900"/></svg>
<div class="t btn" style="left:1196px;top:178.2px;">Customize</div>
<div class="a" style="left:215px;top:392px;width:1062px;height:32.500px;background:#f1f2fc"></div>
<div class="hline" style="left:235px;top:213px;width:1042px;background:#efedec"></div>
<div class="hline" style="left:235px;top:246px;width:1042px;background:#efedec"></div>
<div class="hline" style="left:235px;top:278.3px;width:1042px;background:#efedec"></div>
<div class="hline" style="left:235px;top:310.3px;width:1042px;background:#efedec"></div>
<div class="hline" style="left:235px;top:456px;width:1042px;background:#efedec"></div>
<div class="hline" style="left:235px;top:537.5px;width:1042px;background:#efedec"></div>
<div class="hline" style="left:235px;top:569.5px;width:1042px;background:#efedec"></div>
<div class="hline" style="left:235px;top:601.5px;width:1042px;background:#efedec"></div>
<div class="vline" style="left:692px;top:213px;height:495px"></div>
<div class="vline" style="left:798px;top:213px;height:97.30000000000001px"></div>
<div class="vline" style="left:904px;top:213px;height:97.30000000000001px"></div>
<div class="vline" style="left:1009px;top:213px;height:97.30000000000001px"></div>
<div class="vline" style="left:1115px;top:213px;height:97.30000000000001px"></div>
<div class="vline" style="left:1220px;top:213px;height:97.30000000000001px"></div>
<div class="vline" style="left:798px;top:392px;height:64px"></div>
<div class="vline" style="left:904px;top:392px;height:64px"></div>
<div class="vline" style="left:1009px;top:392px;height:64px"></div>
<div class="vline" style="left:1115px;top:392px;height:64px"></div>
<div class="vline" style="left:1220px;top:392px;height:64px"></div>
<div class="vline" style="left:798px;top:537.5px;height:64.0px"></div>
<div class="vline" style="left:904px;top:537.5px;height:64.0px"></div>
<div class="vline" style="left:1009px;top:537.5px;height:64.0px"></div>
<div class="vline" style="left:1115px;top:537.5px;height:64.0px"></div>
<div class="vline" style="left:1220px;top:537.5px;height:64.0px"></div>
<div class="t colh" style="left:235px;top:220px;">Task name</div>
<svg style="left:672.500px;top:228px" width="8" height="5" viewBox="0 0 8 5"><path d="M0.700 0.700L4 4 7.300 0.700" stroke="#6d6e6f" stroke-width="1.200" fill="none" stroke-linecap="round" stroke-linejoin="round"/></svg>
<div class="t colh" style="left:700.8px;top:220px;">Due date</div>
<div class="t colh" style="left:806.5px;top:220px;">Assignee</div>
<div class="t colh" style="left:912px;top:220px;">Priority</div>
<svg style="left:1018.5px;top:222.500px" width="11" height="15" viewBox="0 0 11 15"><circle cx="5.500" cy="5" r="4.300" fill="none" stroke="#f1bd6c" stroke-width="1.200"/><path d="M2.800 8.800v5.400l2.700-1.700 2.700 1.700V8.800" fill="none" stroke="#f1bd6c" stroke-width="1.200" stroke-linejoin="round"/></svg>
<div class="t colh" style="left:1035.8px;top:219px;">New</div>
<svg style="left:1124px;top:222.500px" width="11" height="15" viewBox="0 0 11 15"><circle cx="5.500" cy="5" r="4.300" fill="none" stroke="#f1bd6c" stroke-width="1.200"/><path d="M2.800 8.800v5.400l2.700-1.700 2.700 1.700V8.800" fill="none" stroke="#f1bd6c" stroke-width="1.200" stroke-linejoin="round"/></svg>
<div class="t colh" style="left:1140.8px;top:219px;">Custom...</div>
<svg style="left:1229.5px;top:222.500px" width="11" height="15" viewBox="0 0 11 15"><circle cx="5.500" cy="5" r="4.300" fill="none" stroke="#f1bd6c" stroke-width="1.200"/><path d="M2.800 8.800v5.400l2.700-1.700 2.700 1.700V8.800" fill="none" stroke="#f1bd6c" stroke-width="1.200" stroke-linejoin="round"/></svg>
<div class="t colh" style="left:1246.8px;top:219px;">No of</div>
<svg style="left:247px;top:258.5px" width="5" height="8" viewBox="0 0 5 8"><path d="M0 0v8l5-4z" fill="#555"/></svg>
<svg style="left:260.500px;top:255.0px" width="15" height="15" viewBox="0 0 15 15"><circle cx="7.500" cy="7.500" r="6.800" fill="none" stroke="#8a898a" stroke-width="1.100"/><path d="M4.800 7.800l1.900 1.900 3.400-3.800" fill="none" stroke="#8a898a" stroke-width="1.100" stroke-linecap="round" stroke-linejoin="round"/></svg>
<div class="t task" style="left:283.8px;top:252.5px;">API intergation</div>
<div class="t colh" style="left:380px;top:252.5px;color:#6d6e6f;-webkit-text-stroke:0.200px #6d6e6f">2</div><svg style="left:389.8px;top:257.7px" width="12" height="9.800" viewBox="0 0 11 9"><path d="M0.600 0.500v2.200a1.500 1.500 0 0 0 1.500 1.500h5.500M0.600 2.500v3a1.500 1.500 0 0 0 1.500 1.500h5.500" fill="none" stroke="#6d6e6f" stroke-width="1.300"/><circle cx="9.300" cy="4.200" r="1.300" fill="none" stroke="#6d6e6f" stroke-width="1"/><circle cx="9.300" cy="7.300" r="1.300" fill="none" stroke="#6d6e6f" stroke-width="1"/></svg>
<div class="t colh" style="left:700.8px;top:252.5px;color:#e8596e;font-size:11px">25 Feb</div>
<div class="av" style="left:806.300px;top:252px;background:#f8df72">Ni</div>
<div class="t colh" style="left:831.3px;top:252.5px;color:#1e1f21;font-size:11px">Nithya</div>
<div class="a" style="left:915.800px;top:253.500px;width:54.500px;height:18px;border-radius:9px;background:#ec8d71"></div>
<div class="t colh" style="left:923.3px;top:252.5px;color:#1e1f21;font-size:11px;-webkit-text-stroke:0.250px #1e1f21">Medium</div>
<div class="pill" style="left:1017.5px;top:254.0px;width:68px;height:17px;border-radius:8.500px"></div><div class="pill" style="left:1123px;top:254.0px;width:68px;height:17px;border-radius:8.500px"></div><div class="pill" style="left:1228.3px;top:254.0px;width:49px;height:17px;border-radius:8.500px 0 0 8.500px"></div>
<svg style="left:260.500px;top:287.0px" width="15" height="15" viewBox="0 0 15 15"><circle cx="7.500" cy="7.500" r="7.150" fill="#5da283"/><path d="M4.700 7.800l1.900 1.900 3.400-3.800" fill="none" stroke="#fff" stroke-width="1.250" stroke-linecap="round" stroke-linejoin="round"/></svg>
<div class="t done" style="left:283.8px;top:284.5px;">Section 1 Task</div>
<div class="pill" style="left:1017.5px;top:286.0px;width:68px;height:17px;border-radius:8.500px"></div><div class="pill" style="left:1123px;top:286.0px;width:68px;height:17px;border-radius:8.500px"></div><div class="pill" style="left:1228.3px;top:286.0px;width:49px;height:17px;border-radius:8.500px 0 0 8.500px"></div>
<div class="t addt" style="left:284.8px;top:317.5px;">Add task...</div>
<svg style="left:220.500px;top:365px" width="6" height="11" viewBox="0 0 6 11"><circle cx="1" cy="1" r="0.800" fill="#afabac"/><circle cx="1" cy="3.8" r="0.800" fill="#afabac"/><circle cx="1" cy="6.6" r="0.800" fill="#afabac"/><circle cx="1" cy="9.4" r="0.800" fill="#afabac"/><circle cx="5" cy="1" r="0.800" fill="#afabac"/><circle cx="5" cy="3.8" r="0.800" fill="#afabac"/><circle cx="5" cy="6.6" r="0.800" fill="#afabac"/><circle cx="5" cy="9.4" r="0.800" fill="#afabac"/></svg>
<svg style="left:243px;top:367.5px" width="8.500" height="5" viewBox="0 0 8.500 5"><path d="M0 0h8.500L4.250 5z" fill="#6d6e6f"/></svg>
<div class="t sect" style="left:263px;top:359.5px;">Doing</div>
<svg style="left:312.300px;top:364.500px" width="11" height="11" viewBox="0 0 11 11"><path d="M5.500 0.300v10.400M0.300 5.500h10.400" stroke="#565557" stroke-width="1.300"/></svg>
<div class="a" style="left:335px;top:368.700px;width:2.500px;height:2.500px;border-radius:50%;background:#565557;box-shadow:6px 0 0 #565557,12px 0 0 #565557"></div>
<svg style="left:488px;top:356.300px" width="14.500" height="15.500" viewBox="0 0 14 15"><path d="M3.500 8V4.200a1 1 0 0 1 2 0V2.800a1 1 0 0 1 2 0v1a1 1 0 0 1 2 0v1a1 1 0 0 1 2 0V10c0 2.500-1.500 4.300-4 4.300H6.500c-1.500 0-2.500-.8-3.300-2L1 8.800a1 1 0 0 1 1.600-1.100z" fill="#fff" stroke="#222" stroke-width="1" stroke-linejoin="round"/><path d="M5.500 4.500v3M7.500 4v3.500M9.500 4.500v3M5.800 10v2M7.500 10v2M9.200 10v2" stroke="#222" stroke-width="0.700"/></svg>
<svg style="left:247px;top:404.0px" width="5" height="8" viewBox="0 0 5 8"><path d="M0 0v8l5-4z" fill="#555"/></svg>
<svg style="left:260.500px;top:400.5px" width="15" height="15" viewBox="0 0 15 15"><circle cx="7.500" cy="7.500" r="7.150" fill="#5da283"/><path d="M4.700 7.800l1.900 1.900 3.400-3.800" fill="none" stroke="#fff" stroke-width="1.250" stroke-linecap="round" stroke-linejoin="round"/></svg>
<div class="t done" style="left:283.8px;top:398px;;letter-spacing:0.15px">Authorization</div>
<div class="t colh" style="left:372.5px;top:398px;color:#6d6e6f;-webkit-text-stroke:0.200px #6d6e6f">5</div><svg style="left:382.3px;top:403.2px" width="12" height="9.800" viewBox="0 0 11 9"><path d="M0.600 0.500v2.200a1.500 1.500 0 0 0 1.500 1.500h5.500M0.600 2.500v3a1.500 1.500 0 0 0 1.500 1.500h5.500" fill="none" stroke="#6d6e6f" stroke-width="1.300"/><circle cx="9.300" cy="4.200" r="1.300" fill="none" stroke="#6d6e6f" stroke-width="1"/><circle cx="9.300" cy="7.300" r="1.300" fill="none" stroke="#6d6e6f" stroke-width="1"/></svg>
<div class="t colh" style="left:700.8px;top:398px;color:#a2a0a2;font-size:11px">24 Feb</div>
<div class="av" style="left:806.300px;top:397.500px;background:#f6efc4;color:#b9b5a6">MO</div>
<div class="t colh" style="left:831.3px;top:398px;color:#b5b3b6;font-size:11px">Moses Ogwo</div>
<div class="a" style="left:915.800px;top:399px;width:35px;height:18px;border-radius:9px;background:#f1bd6c"></div>
<div class="t colh" style="left:923.3px;top:398px;color:#1e1f21;font-size:11px;-webkit-text-stroke:0.250px #1e1f21">Low</div>
<div class="pill" style="left:1017.5px;top:399.5px;width:68px;height:17px;border-radius:8.500px"></div><div class="pill" style="left:1123px;top:399.5px;width:68px;height:17px;border-radius:8.500px"></div><div class="pill" style="left:1228.3px;top:399.5px;width:49px;height:17px;border-radius:8.500px 0 0 8.500px"></div>
<svg style="left:260.500px;top:432.5px" width="15" height="15" viewBox="0 0 15 15"><circle cx="7.500" cy="7.500" r="7.150" fill="#5da283"/><path d="M4.700 7.800l1.900 1.900 3.400-3.800" fill="none" stroke="#fff" stroke-width="1.250" stroke-linecap="round" stroke-linejoin="round"/></svg>
<div class="t done" style="left:283.8px;top:430px;">New task</div>
<div class="pill" style="left:1017.5px;top:431.5px;width:68px;height:17px;border-radius:8.500px"></div><div class="pill" style="left:1123px;top:431.5px;width:68px;height:17px;border-radius:8.500px"></div><div class="pill" style="left:1228.3px;top:431.5px;width:49px;height:17px;border-radius:8.500px 0 0 8.500px"></div>
<div class="t addt" style="left:284.8px;top:463px;">Add task...</div>
<svg style="left:243px;top:513.5px" width="8.500" height="5" viewBox="0 0 8.500 5"><path d="M0 0h8.500L4.250 5z" fill="#6d6e6f"/></svg>
<div class="t sect" style="left:263px;top:505.5px;">Done</div>
<svg style="left:247px;top:549.7px" width="5" height="8" viewBox="0 0 5 8"><path d="M0 0v8l5-4z" fill="#555"/></svg>
<svg style="left:260.500px;top:546.2px" width="15" height="15" viewBox="0 0 15 15"><circle cx="7.500" cy="7.500" r="7.150" fill="#5da283"/><path d="M4.700 7.800l1.900 1.900 3.400-3.800" fill="none" stroke="#fff" stroke-width="1.250" stroke-linecap="round" stroke-linejoin="round"/></svg>
<div class="t done" style="left:283.8px;top:543.7px;;letter-spacing:0.2px">Database Architecture</div>
<div class="t colh" style="left:424.3px;top:543.7px;color:#6d6e6f;-webkit-text-stroke:0.200px #6d6e6f">2</div><svg style="left:434.1px;top:548.9px" width="12" height="9.800" viewBox="0 0 11 9"><path d="M0.600 0.500v2.200a1.500 1.500 0 0 0 1.500 1.500h5.500M0.600 2.500v3a1.500 1.500 0 0 0 1.500 1.500h5.500" fill="none" stroke="#6d6e6f" stroke-width="1.300"/><circle cx="9.300" cy="4.200" r="1.300" fill="none" stroke="#6d6e6f" stroke-width="1"/><circle cx="9.300" cy="7.300" r="1.300" fill="none" stroke="#6d6e6f" stroke-width="1"/></svg>
<div class="t colh" style="left:700.8px;top:543.7px;color:#a2a0a2;font-size:11px">28 Feb</div>
<div class="pill" style="left:1017.5px;top:545.2px;width:68px;height:17px;border-radius:8.500px"></div><div class="pill" style="left:1123px;top:545.2px;width:68px;height:17px;border-radius:8.500px"></div><div class="pill" style="left:1228.3px;top:545.2px;width:49px;height:17px;border-radius:8.500px 0 0 8.500px"></div>
<svg style="left:260.500px;top:578.2px" width="15" height="15" viewBox="0 0 15 15"><circle cx="7.500" cy="7.500" r="7.150" fill="#5da283"/><path d="M4.700 7.800l1.900 1.900 3.400-3.800" fill="none" stroke="#fff" stroke-width="1.250" stroke-linecap="round" stroke-linejoin="round"/></svg>
<div class="t done" style="left:283.8px;top:575.7px;">Done Task</div>
<div class="pill" style="left:1017.5px;top:577.2px;width:68px;height:17px;border-radius:8.500px"></div><div class="pill" style="left:1123px;top:577.2px;width:68px;height:17px;border-radius:8.500px"></div><div class="pill" style="left:1228.3px;top:577.2px;width:49px;height:17px;border-radius:8.500px 0 0 8.500px"></div>
<div class="t addt" style="left:284.8px;top:608.7px;">Add task...</div>
<svg style="left:243px;top:659.0px" width="8.500" height="5" viewBox="0 0 8.500 5"><path d="M0 0h8.500L4.250 5z" fill="#6d6e6f"/></svg>
<div class="t sect" style="left:263px;top:651px;">Final</div>
<svg style="left:243px;top:704.5px" width="8.500" height="5" viewBox="0 0 8.500 5"><path d="M0 0h8.500L4.250 5z" fill="#6d6e6f"/></svg>
<div class="t sect" style="left:263px;top:696.5px;">Semi</div>
<div class="a" style="left:1277px;top:0;width:3px;height:708px;background:#0c0c0c;z-index:20"></div>
<!-- recorder overlay -->
<div class="a" style="left:35px;top:646px;width:81px;height:34px;border-radius:7px;background:#2a2b2d"></div>
<div class="a" style="left:49.500px;top:657.800px;width:11px;height:11px;border-radius:50%;background:#f00"></div>
<div class="t" style="left:76px;top:653px;font-size:14px;color:#fff;letter-spacing:-0.3px">5:51</div>
<div class="a" style="left:122.500px;top:646px;width:106px;height:34px;border-radius:7px;background:linear-gradient(90deg,#bcbcbc 0,#bcbcbc 90.500px,#fdfdfd 90.500px);box-shadow:0 1px 3px rgba(0,0,0,.15)"></div>
<div class="a" style="left:158px;top:646px;width:1px;height:34px;background:#adadad"></div>
<div class="a" style="left:194px;top:646px;width:1px;height:34px;background:#adadad"></div>
<svg style="left:133px;top:656px" width="14" height="15" viewBox="0 0 14 15"><path d="M3.200 4.200A5.300 5.300 0 1 1 1.700 8.500" stroke="#3a3a3a" stroke-width="1.500" fill="none"/><path d="M1 1.500v4h4z" fill="#3a3a3a"/></svg>
<div class="a" style="left:172.300px;top:658px;width:2.800px;height:11px;background:#3a3a3a"></div>
<div class="a" style="left:177.200px;top:658px;width:2.800px;height:11px;background:#3a3a3a"></div>
<div class="a" style="left:206px;top:657.500px;width:11px;height:11px;background:linear-gradient(90deg,#3a3a3a 0,#3a3a3a 7px,#555 7px)"></div>
</body>
</html>
